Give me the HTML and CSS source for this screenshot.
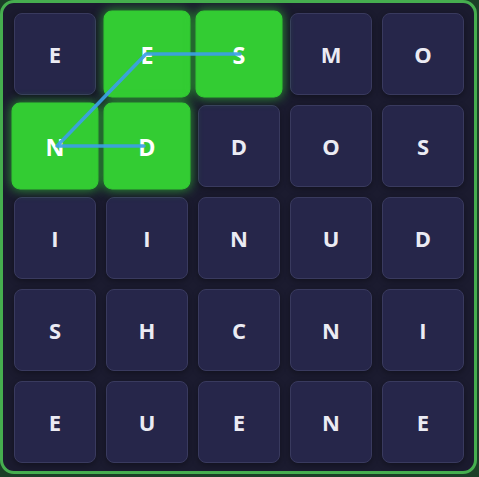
FILE: index.html
```html
<!DOCTYPE html>
<html>
<head>
<meta charset="utf-8">
<link rel="stylesheet" href="styles.css">
</head>
<body>
<div class="board">
  <div class="grid">
    <div class="cell">E</div>
    <div class="cell sel">E</div>
    <div class="cell sel">S</div>
    <div class="cell">M</div>
    <div class="cell">O</div>
    <div class="cell sel">N</div>
    <div class="cell sel">D</div>
    <div class="cell">D</div>
    <div class="cell">O</div>
    <div class="cell">S</div>
    <div class="cell">I</div>
    <div class="cell">I</div>
    <div class="cell">N</div>
    <div class="cell">U</div>
    <div class="cell">D</div>
    <div class="cell">S</div>
    <div class="cell">H</div>
    <div class="cell">C</div>
    <div class="cell">N</div>
    <div class="cell">I</div>
    <div class="cell">E</div>
    <div class="cell">U</div>
    <div class="cell">E</div>
    <div class="cell">N</div>
    <div class="cell">E</div>
  </div>
  <svg class="path" width="477" height="474" viewBox="0 0 477 474">
    <polyline points="240,54 146,54 57,146 144,146" fill="none" stroke="#3c9fe6" stroke-opacity="0.92" stroke-width="3.5" stroke-linecap="round" stroke-linejoin="round"/>
  </svg>
</div>
</body>
</html>
```

FILE: styles.css
```css
html, body {
  margin: 0;
  padding: 0;
  background: #1b3f27;
}
.board {
  position: relative;
  box-sizing: border-box;
  width: 477px;
  height: 474px;
  border: 3px solid #46ae4f;
  border-radius: 14px;
  background: #1b1b2f;
  padding: 10px 0 0 11px;
}
.grid {
  display: grid;
  grid-template-columns: repeat(5, 82px);
  grid-template-rows: repeat(5, 82px);
  gap: 10px;
}
.cell {
  box-sizing: border-box;
  background: #26264a;
  border: 1px solid #393a5e;
  border-radius: 8px;
  box-shadow: 0 2px 6px rgba(0, 0, 0, 0.35);
  display: flex;
  align-items: center;
  justify-content: center;
  font-family: "Open Sans", "DejaVu Sans", sans-serif;
  font-weight: 700;
  font-size: 22px;
  color: #ebebf3;
}
.cell.sel {
  background: #33cc33;
  border-color: #33cc33;
  color: #ffffff;
  transform: scale(1.06);
  box-shadow: 0 0 10px rgba(50, 205, 50, 0.7);
}
.path {
  position: absolute;
  left: -3px;
  top: -3px;
  pointer-events: none;
}
```
